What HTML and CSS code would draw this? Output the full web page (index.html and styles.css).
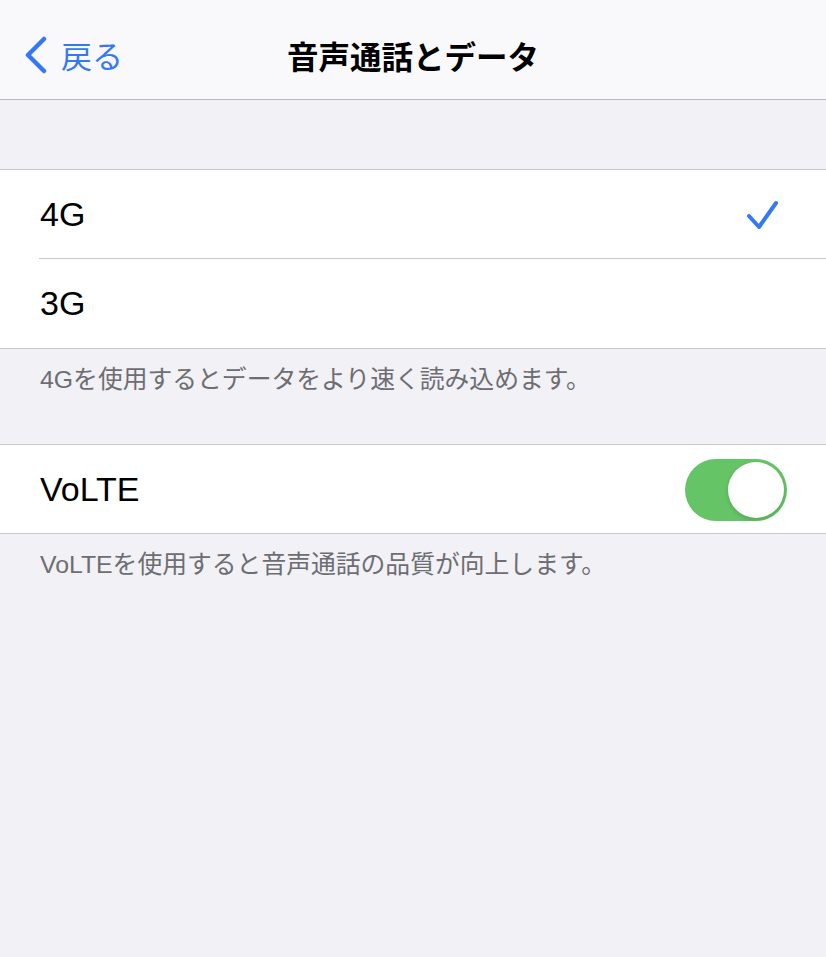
FILE: index.html
```html
<!DOCTYPE html>
<html lang="ja">
<head>
  <meta charset="UTF-8">
  <meta name="viewport" content="width=device-width, initial-scale=1.0">
  <title>音声通話とデータ</title>
  <link rel="stylesheet" href="styles.css">
</head>
<body>

<header class="nav">
  <a class="back" href="#">
    <svg class="chevron" width="24" height="38" viewBox="0 0 24 38">
      <polyline points="20,3 4,19 20,35" />
    </svg>
    <span>戻る</span>
  </a>
  <h1 class="title">音声通話とデータ</h1>
</header>

<div class="spacer"></div>

<section class="group">
  <div class="row">
    <span class="label">4G</span>
    <svg class="check" width="34" height="32" viewBox="0 0 34 32">
      <polyline points="4,17 14,28 31,4" />
    </svg>
  </div>
  <div class="row tall">
    <span class="label">3G</span>
  </div>
</section>
<p class="note">4Gを使用するとデータをより速く読み込めます。</p>

<section class="group">
  <div class="row">
    <span class="label">VoLTE</span>
    <span class="toggle on"><span class="knob"></span></span>
  </div>
</section>
<p class="note">VoLTEを使用すると音声通話の品質が向上します。</p>

</body>
</html>
```

FILE: styles.css
```css
body {
  margin: 0;
  background-color: #f1f1f6;
  font-family: "Liberation Sans", "Noto Sans CJK JP", sans-serif;
  color: #000;
}

.nav {
  position: relative;
  height: 99px;
  background-color: #f9f9fb;
  border-bottom: 1px solid #b8b8bc;
  display: flex;
  align-items: center;
  justify-content: center;
}
.back {
  position: absolute;
  left: 24px;
  top: 36px;
  display: flex;
  align-items: center;
  gap: 13px;
  color: #3478f6;
  text-decoration: none;
  font-size: 31px;
  font-family: "Noto Sans CJK JP", sans-serif;
  line-height: 38px;
}
.chevron polyline {
  fill: none;
  stroke: #3478f6;
  stroke-width: 4.5;
  stroke-linecap: round;
  stroke-linejoin: round;
}
.title {
  margin: 0;
  margin-top: 10px;
  font-size: 31.5px;
  font-weight: bold;
  font-family: "Noto Sans CJK JP", sans-serif;
}

.spacer {
  height: 69px;
}

.group {
  background-color: #fff;
  border-top: 1px solid #c8c8cc;
  border-bottom: 1px solid #c8c8cc;
  padding-left: 39px;
}
.row {
  height: 88px;
  display: flex;
  align-items: center;
  justify-content: space-between;
  padding-right: 39px;
  border-bottom: 1px solid #c8c8cc;
}
.row.tall {
  height: 89px;
}
.row:last-child {
  border-bottom: none;
}
.label {
  font-size: 34px;
  padding-left: 1px;
}

.check {
  margin-right: 8px;
  margin-top: 2px;
}
.check polyline {
  fill: none;
  stroke: #3478f6;
  stroke-width: 4;
  stroke-linecap: round;
  stroke-linejoin: round;
}

.toggle {
  position: relative;
  width: 102px;
  height: 62px;
  border-radius: 31px;
  background-color: #e5e5ea;
  margin-top: 2px;
}
.toggle.on {
  background-color: #64c466;
}
.knob {
  position: absolute;
  top: 3px;
  right: 3px;
  width: 56px;
  height: 56px;
  border-radius: 50%;
  background-color: #fff;
  box-shadow: 0 2px 4px rgba(0, 0, 0, 0.15);
}

.note {
  margin: 0;
  height: 95px;
  box-sizing: border-box;
  padding: 15px 40px 0;
  font-size: 24.8px;
  line-height: 32px;
  color: #6d6d72;
}
```
